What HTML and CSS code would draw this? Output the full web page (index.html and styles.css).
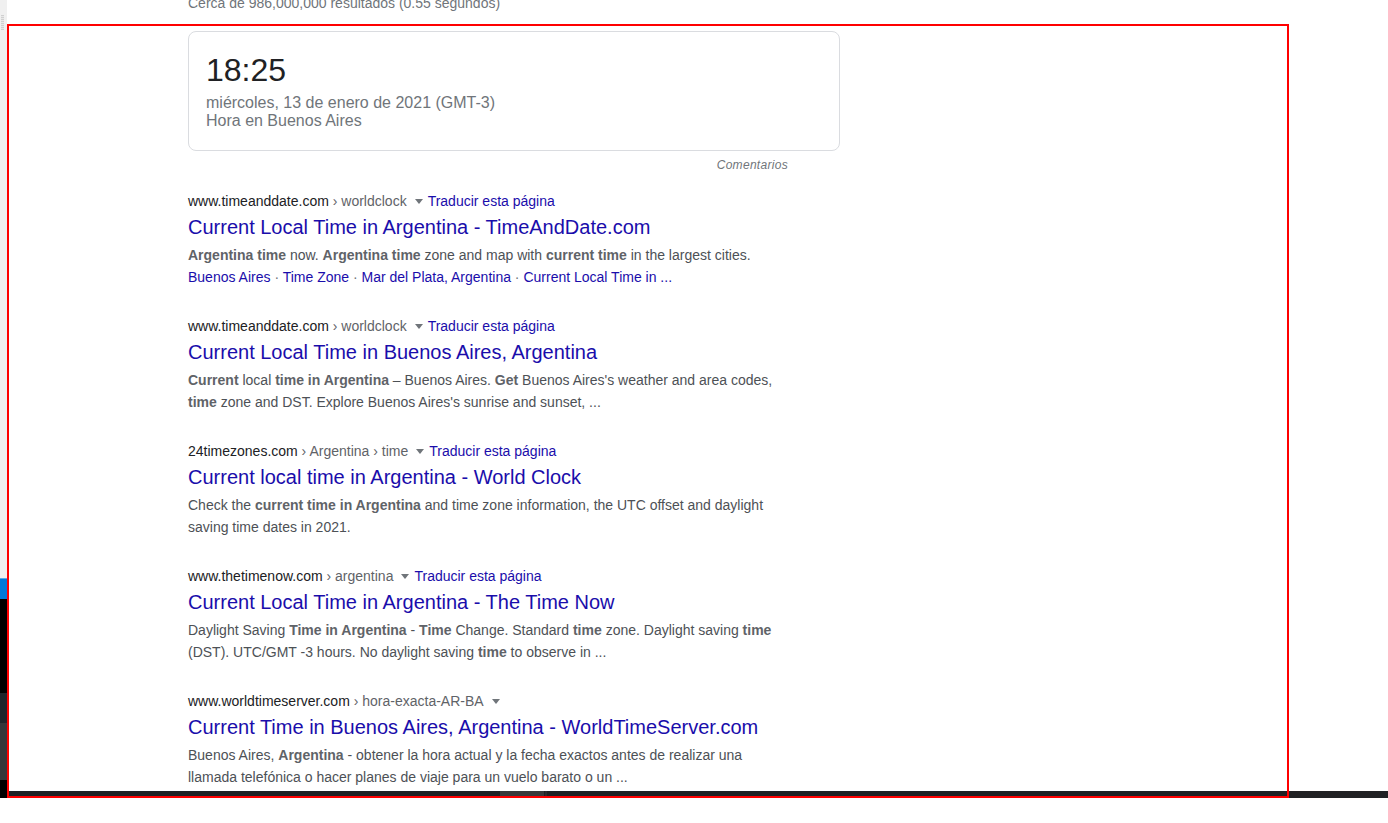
FILE: index.html
```html
<!DOCTYPE html>
<html lang="es">
<head>
<meta charset="utf-8">
<title>hora argentina</title>
<link rel="stylesheet" href="styles.css">
</head>
<body>
<div class="screen">
  <div class="strip">
    <div class="seg seg-light"><span class="grip"></span></div>
    <div class="seg seg-blue"></div>
    <div class="seg seg-black1"></div>
    <div class="seg seg-dark1"></div>
    <div class="seg seg-dark2"></div>
    <div class="seg seg-black2"></div>
  </div>
  <div class="main">
    <div class="viewport">
      <div class="content">
        <div class="stats">Cerca de 986,000,000 resultados (0.55 segundos)</div>
        <div class="card">
          <div class="clock">18:25</div>
          <div class="date">miércoles, 13 de enero de 2021 (GMT-3)</div>
          <div class="place">Hora en Buenos Aires</div>
        </div>
        <div class="feedback"><span>Comentarios</span></div>

        <div class="result">
          <div class="cite"><span class="dom">www.timeanddate.com</span><span class="path"> › worldclock</span><span class="caret"></span><a class="tr">Traducir esta página</a></div>
          <a class="title">Current Local Time in Argentina - TimeAndDate.com</a>
          <div class="snip"><b>Argentina time</b> now. <b>Argentina time</b> zone and map with <b>current time</b> in the largest cities.</div>
          <div class="links"><a>Buenos Aires</a><span class="dot"> · </span><a>Time Zone</a><span class="dot"> · </span><a>Mar del Plata, Argentina</a><span class="dot"> · </span><a>Current Local Time in ...</a></div>
        </div>

        <div class="result">
          <div class="cite"><span class="dom">www.timeanddate.com</span><span class="path"> › worldclock</span><span class="caret"></span><a class="tr">Traducir esta página</a></div>
          <a class="title">Current Local Time in Buenos Aires, Argentina</a>
          <div class="snip"><b>Current</b> local <b>time in Argentina</b> – Buenos Aires. <b>Get</b> Buenos Aires's weather and area codes, <b>time</b> zone and DST. Explore Buenos Aires's sunrise and sunset, ...</div>
        </div>

        <div class="result">
          <div class="cite"><span class="dom">24timezones.com</span><span class="path"> › Argentina › time</span><span class="caret"></span><a class="tr">Traducir esta página</a></div>
          <a class="title">Current local time in Argentina - World Clock</a>
          <div class="snip">Check the <b>current time in Argentina</b> and time zone information, the UTC offset and daylight saving time dates in 2021.</div>
        </div>

        <div class="result">
          <div class="cite"><span class="dom">www.thetimenow.com</span><span class="path"> › argentina</span><span class="caret"></span><a class="tr">Traducir esta página</a></div>
          <a class="title">Current Local Time in Argentina - The Time Now</a>
          <div class="snip">Daylight Saving <b>Time in Argentina</b> - <b>Time</b> Change. Standard <b>time</b> zone. Daylight saving <b>time</b> (DST). UTC/GMT -3 hours. No daylight saving <b>time</b> to observe in ...</div>
        </div>

        <div class="result">
          <div class="cite"><span class="dom">www.worldtimeserver.com</span><span class="path"> › hora-exacta-AR-BA</span><span class="caret"></span></div>
          <a class="title">Current Time in Buenos Aires, Argentina - WorldTimeServer.com</a>
          <div class="snip">Buenos Aires, <b>Argentina</b> - obtener la hora actual y la fecha exactos antes de realizar una llamada telefónica o hacer planes de viaje para un vuelo barato o un ...</div>
        </div>
      </div>
    </div>
    <div class="taskbar"><span class="tb-b"></span><span class="tb-c"></span></div>
  </div>
  <div class="frame"></div>
</div>
</body>
</html>
```

FILE: styles.css
```css
html, body {
  margin: 0;
  padding: 0;
  background: #ffffff;
}
body {
  font-family: "Liberation Sans", Arial, sans-serif;
  width: 1388px;
  height: 823px;
  overflow: hidden;
}
.screen {
  position: relative;
  display: flex;
  height: 798px;
}
.strip {
  width: 7px;
  display: flex;
  flex-direction: column;
  flex-shrink: 0;
}
.seg { width: 7px; }
.seg-light {
  height: 578px;
  background: #f0f0f0;
  position: relative;
}
.grip {
  position: absolute;
  left: 1px;
  top: 15px;
  width: 3px;
  height: 15px;
  background: repeating-linear-gradient(#d0d0d0 0 1px, #e8e8e8 1px 2px);
}
.seg-blue {
  height: 21px;
  background: #0078d7;
  border-top: 1px solid #5aa8e6;
  box-sizing: border-box;
}
.seg-black1 { height: 94px; background: #000000; }
.seg-dark1 { height: 30px; background: #1f242a; }
.seg-dark2 { height: 57px; background: #35363a; }
.seg-black2 { height: 18px; background: #000000; }

.main {
  flex: 1;
  display: flex;
  flex-direction: column;
  min-width: 0;
}
.viewport {
  flex: 1;
  overflow: hidden;
}
.content {
  margin-left: 181px;
  width: 652px;
}
.stats {
  margin-top: -9px;
  font-size: 14px;
  line-height: 24px;
  color: #70757a;
  height: 24px;
}
.card {
  margin-top: 16px;
  border: 1px solid #dadce0;
  border-radius: 8px;
  padding: 18px 17px 20px;
}
.clock {
  font-size: 32px;
  line-height: 40px;
  color: #202124;
}
.date, .place {
  font-size: 16px;
  line-height: 18px;
  color: #70757a;
}
.date { margin-top: 4px; }
.feedback {
  width: 600px;
  margin-top: 6px;
  text-align: right;
  font-size: 12px;
  line-height: 16px;
  font-style: italic;
  color: #70757a;
  letter-spacing: 0.3px;
}

.result {
  width: 600px;
  height: 125px;
}
.feedback + .result { margin-top: 18px; }
.cite {
  font-size: 14px;
  line-height: 20px;
  white-space: nowrap;
  display: flex;
  align-items: center;
}
.dom { color: #202124; }
.path { color: #5f6368; white-space: pre; }
.caret {
  display: inline-block;
  width: 0;
  height: 0;
  border-left: 4.5px solid transparent;
  border-right: 4.5px solid transparent;
  border-top: 5px solid #70757a;
  margin: 0 5px 0 8px;
}
.tr { color: #1a0dab; }
.title {
  display: block;
  margin-top: 3px;
  font-size: 20px;
  line-height: 26px;
  color: #1a0dab;
  white-space: nowrap;
}
.snip {
  margin-top: 4px;
  font-size: 14px;
  line-height: 22px;
  color: #4d5156;
}
.snip b { color: #5f6368; font-weight: bold; }
.links {
  font-size: 14px;
  line-height: 22px;
  color: #1a0dab;
  white-space: nowrap;
}
.links .dot { color: #70757a; white-space: pre; }

.taskbar {
  height: 7px;
  background: #202124;
  display: flex;
  padding-left: 493px;
}
.tb-b {
  width: 44px;
  background: #3a3a3b;
}
.tb-c {
  width: 2px;
  margin-left: 1px;
  background: #2c2c2e;
}
.frame {
  position: absolute;
  left: 7px;
  top: 24px;
  width: 1282px;
  height: 774px;
  box-sizing: border-box;
  border: 2px solid #ff0000;
  pointer-events: none;
}
```
